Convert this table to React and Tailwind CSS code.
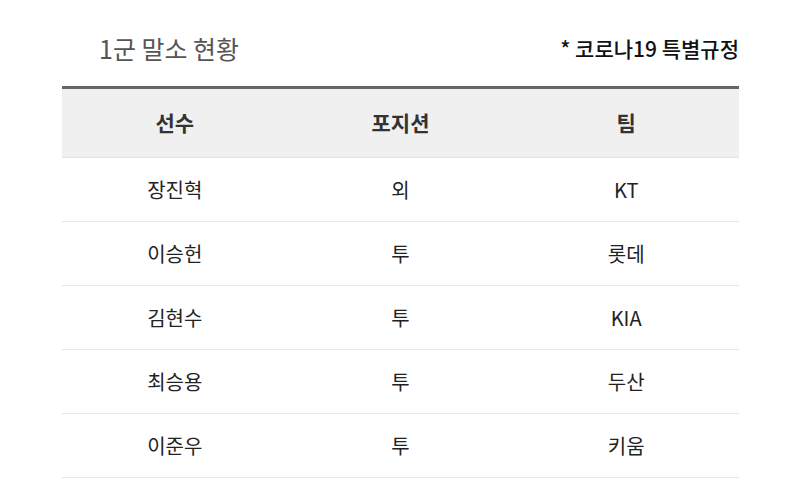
const rows = [
  ['장진혁', '외', 'KT'],
  ['이승헌', '투', '롯데'],
  ['김현수', '투', 'KIA'],
  ['최승용', '투', '두산'],
  ['이준우', '투', '키움'],
];

export default function App() {
  return (
    <main
      className="w-[800px] h-[480px] overflow-hidden bg-white"
      style={{ fontFamily: '"Noto Sans CJK KR", "Noto Sans", sans-serif' }}
    >
      <div className="ml-[62px] w-[677px]">
        {/* Title */}
        <div className="flex items-center justify-between h-[86px] pt-[12px]">
          <h1 className="pl-[37px] text-[25px] text-[#555]">1군 말소 현황</h1>
          <span className="text-[21px] font-medium text-[#111]">* 코로나19 특별규정</span>
        </div>

        {/* Table */}
        <div className="border-t-[3px] border-[#666]">
          <div className="grid grid-cols-3 h-[69px] items-center bg-[#f0f0f0] border-b border-[#e2e2e2]">
            <span className="text-center text-[21px] font-bold text-[#333]">선수</span>
            <span className="text-center text-[21px] font-bold text-[#333]">포지션</span>
            <span className="text-center text-[21px] font-bold text-[#333]">팀</span>
          </div>
          {rows.map((r) => (
            <div key={r[0]} className="grid grid-cols-3 h-[64px] items-center border-b border-[#e6e6e6]">
              {r.map((c, i) => (
                <span key={i} className="text-center text-[20px] text-[#222]">{c}</span>
              ))}
            </div>
          ))}
        </div>
      </div>
    </main>
  );
}
